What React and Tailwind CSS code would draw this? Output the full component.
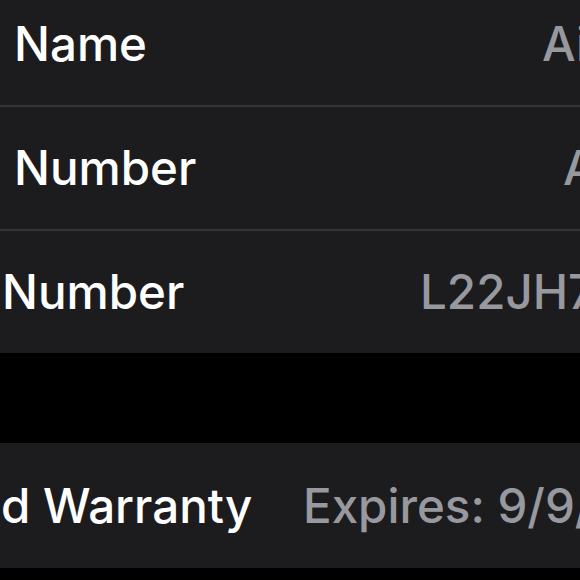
import React from 'react';

const rows = [
  { label: 'Name', labelW: 'w-[528px]', pl: 'pl-[14px]', value: 'AirPods Pro' },
  { label: 'Number', labelW: 'w-[549px]', pl: 'pl-[14px]', value: 'A2084' },
  { label: 'Number', labelW: 'w-[418px]', pl: 'pl-[2px]', value: 'L22JH7GHLKKT' },
];

const Row = ({ label, labelW, pl, value }) => (
  <div className={`flex h-[122px] items-center overflow-hidden bg-[#1c1c1e] ${pl}`}>
    <span className={`${labelW} shrink-0 whitespace-nowrap text-white`}>{label}</span>
    <span className="whitespace-nowrap text-[#98989f]">{value}</span>
  </div>
);

export default function App() {
  return (
    <div className="h-[580px] w-[580px] overflow-hidden bg-black font-['Inter',sans-serif] text-[47.5px] font-medium leading-none">
      <div className="-mt-[17px] flex flex-col">
        {rows.map((r, idx) => (
          <React.Fragment key={idx}>
            {idx > 0 && <div className="h-[2px] bg-[#343437]" />}
            <Row {...r} />
          </React.Fragment>
        ))}
      </div>
      <div className="h-[90px]" />
      <div className="flex h-[125px] items-center overflow-hidden bg-[#1c1c1e] pl-[1px]">
        <span className="w-[302px] shrink-0 whitespace-nowrap text-white">d Warranty</span>
        <span className="whitespace-nowrap text-[#98989f]">Expires: 9/9/21</span>
      </div>
    </div>
  );
}
